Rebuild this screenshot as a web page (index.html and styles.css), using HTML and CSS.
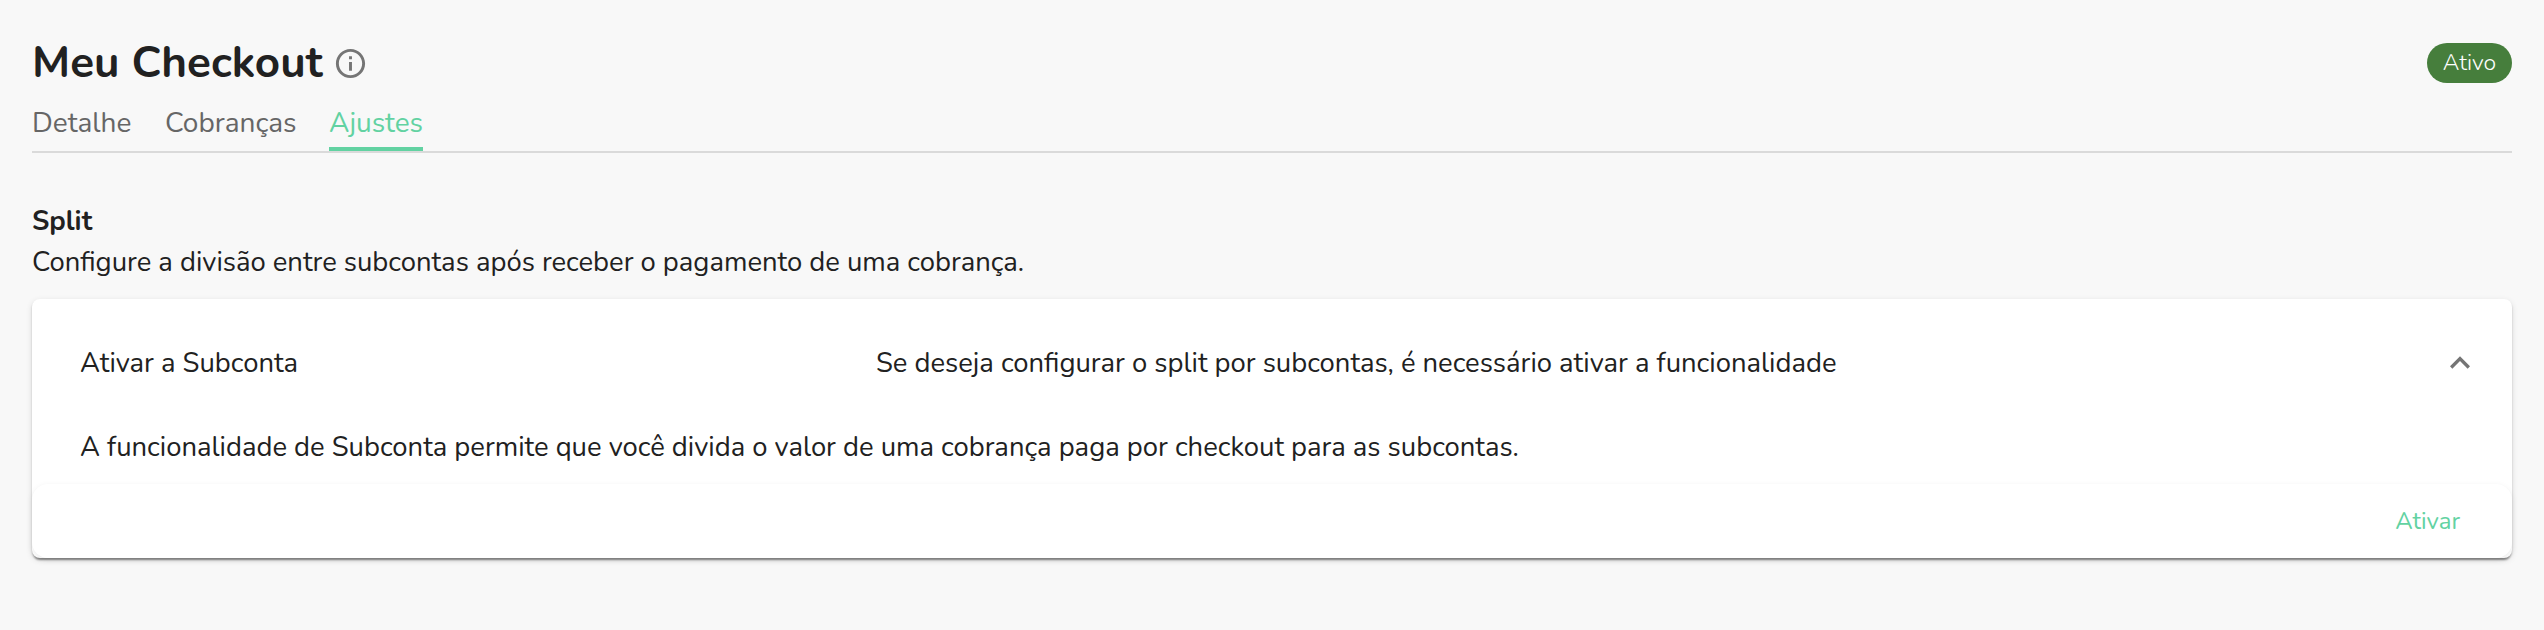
FILE: index.html
```html
<!DOCTYPE html>
<html lang="pt-BR">
<head>
<meta charset="utf-8">
<title>Meu Checkout</title>
<link rel="stylesheet" href="styles.css">
</head>
<body>
<header class="header">
  <div class="heading">
    <h1 class="title">Meu Checkout</h1>
    <svg class="info" viewBox="0 0 24 24"><path d="M11 7h2v2h-2zm0 4h2v6h-2zm1-9C6.480 2 2 6.480 2 12s4.480 10 10 10 10-4.480 10-10S17.520 2 12 2zm0 18c-4.410 0-8-3.590-8-8s3.590-8 8-8 8 3.590 8 8-3.590 8-8 8z"/></svg>
  </div>
  <span class="badge">Ativo</span>
</header>
<nav class="tabs">
  <a class="tab tab-details">Detalhe</a>
  <a class="tab tab-charges">Cobranças</a>
  <a class="tab tab-settings active">Ajustes</a>
</nav>
<main class="section">
  <h2 class="subtitle">Split</h2>
  <p class="lead">Configure a divisão entre subcontas após receber o pagamento de uma cobrança.</p>
  <section class="card">
    <div class="summary">
      <div class="name">Ativar a Subconta</div>
      <div class="hint">Se deseja configurar o split por subcontas, é necessário ativar a funcionalidade</div>
      <svg class="chevron" viewBox="0 0 24 24"><path d="M12 8l-6 6 1.410 1.410L12 10.830l4.590 4.580L18 14z"/></svg>
    </div>
    <p class="details">A funcionalidade de Subconta permite que você divida o valor de uma cobrança paga por checkout para as subcontas.</p>
    <footer class="actions"><button class="action">Ativar</button></footer>
  </section>
</main>
</body>
</html>
```
FILE: styles.css
```css
* { box-sizing: border-box; }
body {
  margin: 0;
  height: 630px;
  padding: 32px 32px 0;
  background: #f8f8f8;
  color: #212121;
  font-family: Nunito, Lato, sans-serif;
  font-size: 27.42px;
  font-weight: 400;
  line-height: 40px;
}
h1, h2, p { margin: 0; font-size: inherit; }
.header { display: flex; justify-content: space-between; align-items: center; height: 62px; }
.heading { display: flex; align-items: center; }
.title { width: 301px; font-size: 44px; line-height: 62px; font-weight: 700; white-space: nowrap; }
.info { width: 35px; height: 35px; fill: #757575; }
.badge {
  display: flex; justify-content: center; align-items: center;
  width: 85px; height: 40px; border-radius: 20px;
  background: #467e3c; color: #fff; font-size: 23px; font-weight: 300;
}
.tabs {
  display: flex; gap: 32px; height: 59px; padding-top: 9px;
  border-bottom: 2px solid #dadada; color: #666; font-size: 28px;
}
.tab { height: 48px; line-height: 40px; white-space: nowrap; }
.tab-details { width: 101px; }
.tab-charges { width: 132px; }
.tab-settings { width: 94px; }
.active { color: #62d2a2; border-bottom: 4px solid #62d2a2; }
.section { padding-top: 48px; white-space: nowrap; }
.subtitle { font-size: 27.5px; font-weight: 700; }
.lead { height: 58px; padding-top: 1px; }
.card {
  height: 259px; border-radius: 8px; background: #fff;
  box-shadow: 0 4px 2px -2px rgba(0,0,0,.28), 0 2px 2px rgba(0,0,0,.2), 0 2px 6px rgba(0,0,0,.12);
}
.summary { display: flex; align-items: center; height: 128px; padding: 0 32px 0 48px; }
.name { width: 796px; }
.hint { flex: 1; }
.chevron { width: 40px; height: 40px; fill: #757575; }
.details { height: 57px; padding-left: 48px; }
.actions {
  display: flex; align-items: center; justify-content: flex-end;
  height: 74px; padding-right: 52px; border-radius: 16px;
  background: #fff; box-shadow: 0 2px 6px rgba(0,0,0,.08);
}
.action { padding: 0; border: 0; background: none; color: #62d2a2; font: inherit; font-size: 24px; }
```
